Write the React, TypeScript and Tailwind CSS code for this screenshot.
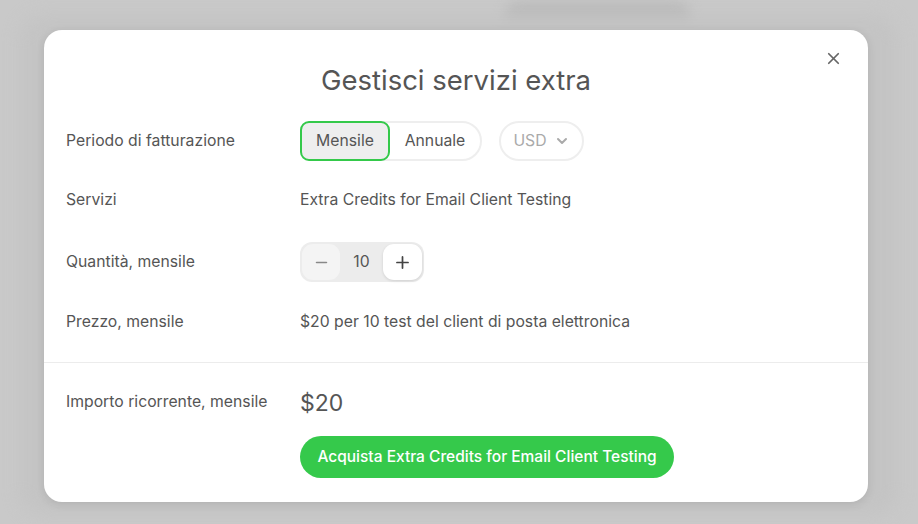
import { Minus, Plus, X, ChevronDown } from "lucide-react";

function Row({ label, children, className = "" }: { label: string; children: React.ReactNode; className?: string }) {
  return (
    <div className={`flex items-center ${className}`}>
      <div className="w-[234px] shrink-0 text-[15.75px] text-[#555]">{label}</div>
      <div className="flex-1 text-[15.75px] text-[#555]">{children}</div>
    </div>
  );
}

export default function App() {
  return (
    <div
      className="relative w-[918px] h-[524px] bg-[#c9c9c9] flex items-start pl-[44px] pt-[30px] overflow-hidden"
      style={{ fontFamily: "Inter, 'Noto Sans', sans-serif" }}
    >
      {/* blurred page behind the overlay */}
      <div className="absolute left-[505px] top-[2px] h-[40px] w-[185px] rounded-[14px] bg-[#bababa] blur-[6px]" />
      <div className="absolute left-[20px] top-[15px] h-[500px] w-[878px] rounded-[24px] bg-[#c4c4c4] blur-[8px]" />

      <div className="relative w-[824px] h-[472px] bg-white rounded-[18px] shadow-[0_2px_10px_rgba(0,0,0,0.1)]">
        <button className="absolute right-[25px] top-[19px] text-[#666]">
          <X className="w-[19px] h-[19px]" strokeWidth={2.2} />
        </button>
        <h1 className="pt-[33px] text-center text-[27.5px] leading-[34px] text-[#555]">Gestisci servizi extra</h1>

        <div className="px-[22px] pt-[24px]">
          <Row label="Periodo di fatturazione" className="h-[40px]">
            <div className="flex items-center gap-[17px]">
              <div className="flex h-[40px] w-[182px] rounded-full border-2 border-[#eee] bg-white">
                <div className="flex w-[90px] items-center justify-center rounded-[9px] border-2 border-[#34c94a] bg-[#eee] -m-[2px] mr-0">
                  Mensile
                </div>
                <div className="flex flex-1 items-center justify-center">Annuale</div>
              </div>
              <div className="flex h-[40px] w-[85px] items-center justify-center gap-[7px] rounded-full border-2 border-[#eee] text-[#aaa]">
                USD
                <ChevronDown className="w-[16px] h-[16px]" strokeWidth={3} />
              </div>
            </div>
          </Row>
          <Row label="Servizi" className="mt-[28px] h-[22px]">
            Extra Credits for Email Client Testing
          </Row>
          <Row label="Quantità, mensile" className="mt-[31px] h-[40px]">
            <div className="flex h-[40px] w-[124px] items-center justify-between rounded-[12px] bg-[#ececec] p-[2px]">
              <div className="flex h-[36px] w-[38px] items-center justify-center rounded-[11px] bg-[#f4f4f4] text-[#888]">
                <Minus className="w-[17px] h-[17px]" strokeWidth={2.2} />
              </div>
              <span className="text-[#555]">10</span>
              <div className="flex h-[36px] w-[39px] items-center justify-center rounded-[11px] bg-white text-[#444] shadow-[0_1px_3px_rgba(0,0,0,0.12)]">
                <Plus className="w-[19px] h-[19px]" strokeWidth={2.2} />
              </div>
            </div>
          </Row>
          <Row label="Prezzo, mensile" className="mt-[29px] h-[22px]">
            $20 per 10 test del client di posta elettronica
          </Row>
        </div>

        <div className="mt-[29px] border-t border-[#ececec]" />

        <div className="flex px-[22px] pt-[27px]">
          <div className="w-[234px] shrink-0 text-[15.75px] text-[#555]">Importo ricorrente, mensile</div>
          <div className="flex flex-col items-start">
            <div className="text-[23px] leading-[28px] text-[#555] -mt-[1px]">$20</div>
            <button className="mt-[19px] h-[42px] w-[374px] rounded-full bg-[#35c94b] text-[15.5px] font-medium text-white">
              Acquista Extra Credits for Email Client Testing
            </button>
          </div>
        </div>
      </div>
    </div>
  );
}
